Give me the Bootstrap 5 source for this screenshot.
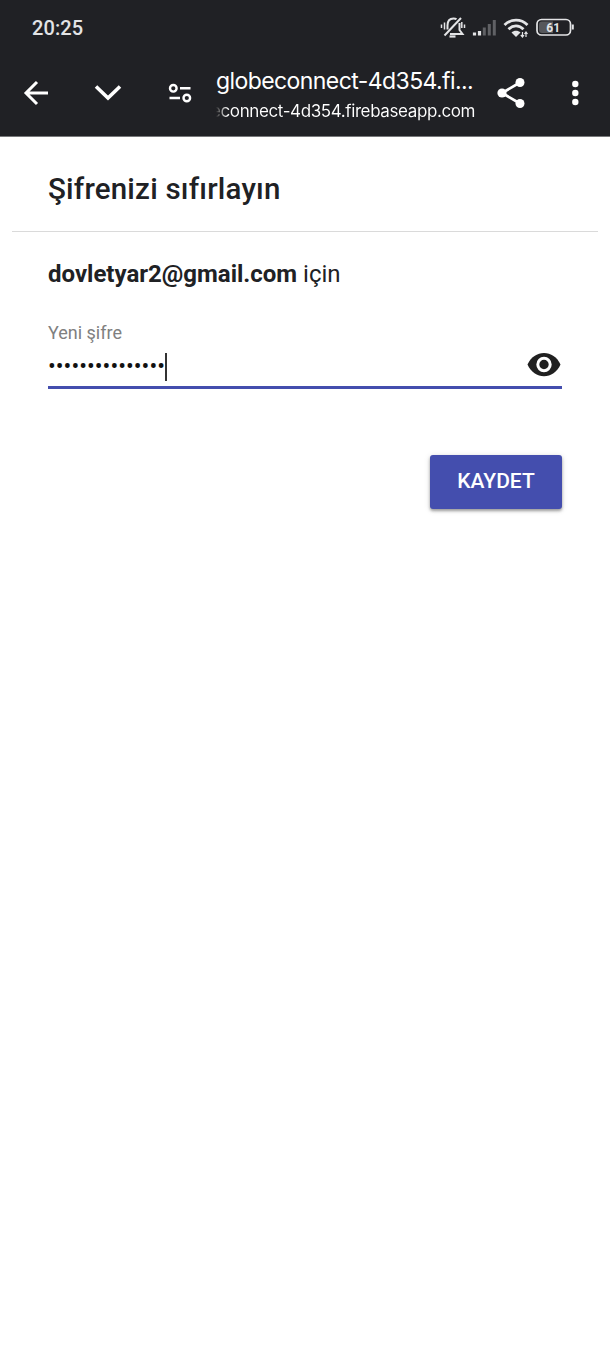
<!DOCTYPE html>
<html lang="tr">
<head>
<meta charset="utf-8">
<meta name="viewport" content="width=device-width, initial-scale=1">
<title>Şifrenizi sıfırlayın</title>
<link href="https://cdn.jsdelivr.net/npm/bootstrap@5.3.0/dist/css/bootstrap.min.css" rel="stylesheet">
<style>
body{font-family:Roboto,sans-serif;color:#202124}
svg{display:block;flex:none}
.browser-top{background:#202125;height:136px;border-bottom:1px solid #77787a;box-sizing:content-box}
.status{height:56px;padding:0 36px 0 32px}
.clock{font-size:20px;font-weight:500;line-height:24px;color:#e3e4e6;letter-spacing:.1px}
.toolbar{height:80px;padding:0 28px 0 22px}
.toolbar>svg{margin-bottom:6px}
.address{width:260px;margin-left:23px;font-family:Inter,sans-serif;white-space:nowrap}
.host{font-size:23px;line-height:30px;letter-spacing:-.58px}
.origin{font-size:17px;line-height:30px;letter-spacing:-.39px;margin-left:-5px}
.origin-fade{background:linear-gradient(90deg,#202125 5px,#666 8px,#fff 16px);-webkit-background-clip:text;background-clip:text;color:transparent}
.panel{margin:0 12px}
.panel-head{height:95px;padding:32px 36px 0;border-bottom:1px solid #dadada}
.panel-head h1{font-size:29.5px;line-height:40px;font-weight:500;letter-spacing:.2px}
.panel-main{padding:27px 36px 24px}
.account{font-size:24px;line-height:30px}
.field{margin-top:32px;border-bottom:3px solid #444eae;height:68px}
.field label{display:block;font-size:18px;line-height:24px;color:#808080}
.secret{height:28px;margin-top:8px}
.dots{font-size:23px;line-height:28px;color:#111;letter-spacing:.04px}
.caret{width:2px;height:28px;background:#333}
.secret svg{margin-bottom:4px}
.save{width:132px;height:54px;margin-top:66px;border-radius:3px;background:#444eae;color:#fff;font-size:21px;line-height:52px;padding:0 0 2px;font-weight:500;box-shadow:0 2px 3px #0005,0 1px 6px #0002}
</style>
</head>
<body class="bg-white min-vh-100">
<header class="browser-top text-white">
  <div class="status d-flex align-items-center justify-content-between">
    <span class="clock">20:25</span>
    <svg width="134" height="26" viewBox="440 14.5 134 26" fill="none" stroke="#e3e4e6">
      <path d="M444.500 35 461 17.500" stroke-width="2"/>
      <path d="M447.500 29V25c0-4.500 2.500-7 6-7q2 0 3 .8M459.500 22.500v7l3 4H450" stroke-width="2"/>
      <path d="M449.500 36h6" stroke-width="2.200"/>
      <path d="M444.500 22v7M441.500 24v3.500M461.800 21.500v6M464.500 24v3.500" stroke-width="1.500"/>
      <path d="M474.500 32v3M479.500 30.500v4.500" stroke-width="3.200"/>
      <path d="M484.300 27v8M489.300 23.500v11.500M494.300 19.500v15.500" stroke="#606165" stroke-width="3"/>
      <path d="M504.500 24.500c6.500-6.500 16.500-6.500 23 0M508.500 28.800c4.500-4.500 10.500-4.500 15 0" stroke-width="2.800"/>
      <path d="M511.500 32c2.500-2.500 6.500-2.500 9 0l-4.500 4.500Z" fill="#e3e4e6" stroke="none"/>
      <path d="M522.500 31.500v5M520.800 34.500l1.700 2 1.500-2M526 36.500v-5M524.500 33.500l1.500-2 1.500 2" stroke-width="1.200"/>
      <rect x="537" y="19" width="33.500" height="15.500" rx="4.500" stroke-width="1.700"/>
      <path d="M542 21h11v11.500h-11q-3 0-3-3V24q0-3 3-3Z" fill="#56575b" stroke="none"/>
      <path d="M572.800 24v5" stroke-width="2"/>
      <text x="553.200" y="31" text-anchor="middle" font-family="Roboto" font-size="12" font-weight="700" fill="#e3e4e6" stroke="none">61</text>
    </svg>
  </div>
  <div class="toolbar d-flex align-items-center">
    <svg width="28" height="30" viewBox="22 78 28 30" fill="none" stroke="#fff" stroke-width="3"><path d="M48 93H26M37 82 26 93l11 11"/></svg>
    <svg style="margin-left:43px" width="30" height="30" viewBox="93 78 30 30" fill="none" stroke="#fff" stroke-width="3.600"><path d="M96 86.500 108 98l12-11.500"/></svg>
    <svg style="margin-left:44px" width="26" height="30" viewBox="167 78 26 30" fill="none" stroke="#fff" stroke-width="2.400"><circle cx="173.300" cy="88.300" r="3.300"/><circle cx="186.800" cy="98" r="3.300"/><path d="M180 88.300h10.500M169.500 98H180"/></svg>
    <div class="address">
      <div class="host">globeconnect-4d354.fi...</div>
      <div class="origin"><span class="origin-fade">econnect-4d354.firebaseapp.com</span></div>
    </div>
    <svg style="margin-left:20px" width="30" height="34" viewBox="496 76 30 34" fill="#fff" stroke="#fff"><path d="M520 82.500 502 93l18 10.500" fill="none" stroke-width="2.700"/><circle cx="520" cy="82.500" r="4.500" stroke="none"/><circle cx="502" cy="93" r="4.600" stroke="none"/><circle cx="520" cy="103.500" r="4.500" stroke="none"/></svg>
    <svg class="ms-auto" width="14" height="30" viewBox="568 78 14 30" fill="#fff"><circle cx="575.300" cy="84" r="3.200"/><circle cx="575.300" cy="93" r="3.200"/><circle cx="575.300" cy="102" r="3.200"/></svg>
  </div>
</header>
<main class="panel">
  <div class="panel-head"><h1 class="m-0">Şifrenizi sıfırlayın</h1></div>
  <form class="panel-main">
    <p class="account m-0"><strong>dovletyar2@gmail.com</strong> için</p>
    <div class="field">
      <label>Yeni şifre</label>
      <div class="secret d-flex align-items-center">
        <span class="dots">•••••••••••••••</span><span class="caret"></span>
        <svg class="ms-auto" width="36" height="28" viewBox="526 351 36 28"><path d="M527.500 364.500C534 349 554 349 560.500 364.500 554 380 534 380 527.500 364.500Z" fill="#202020"/><circle cx="544" cy="364.500" r="6.200" fill="#202020" stroke="#fff" stroke-width="3"/></svg>
      </div>
    </div>
    <div class="d-flex justify-content-end"><button type="button" class="save btn border-0">KAYDET</button></div>
  </form>
</main>
<script src="https://cdn.jsdelivr.net/npm/bootstrap@5.3.0/dist/js/bootstrap.bundle.min.js"></script>
</body>
</html>
